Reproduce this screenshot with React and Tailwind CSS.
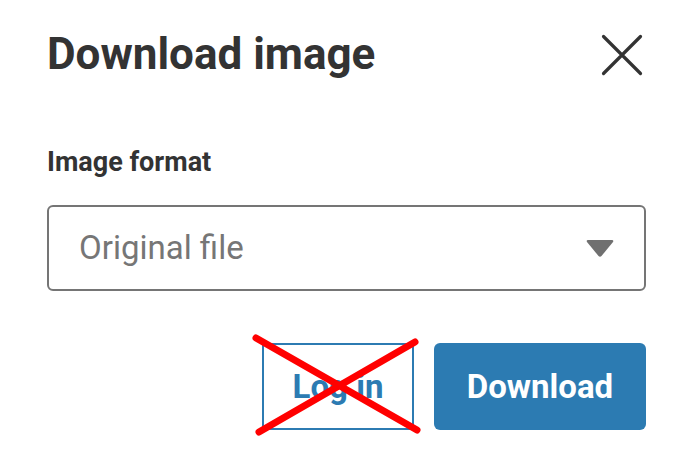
import React from 'react';

const CloseIcon = () => (
    <svg width="42" height="42" viewBox="0 0 42 42" fill="none" className="shrink-0">
        <path d="M2.5 2.5 L39.5 39.5 M39.5 2.5 L2.5 39.5" stroke="#333333" strokeWidth="3.2" strokeLinecap="round" />
    </svg>
);

const Caret = () => (
    <svg width="30" height="20" viewBox="0 0 30 20" className="shrink-0">
        <path d="M3 2 H27 Q29 2 28 4 L16.5 18 Q15 19.5 13.5 18 L2 4 Q1 2 3 2 Z" fill="#707070" />
    </svg>
);

const StrikeOut = () => (
    <svg
        className="absolute left-[-12px] top-[-12px] pointer-events-none"
        width="176"
        height="112"
        viewBox="0 0 176 112"
    >
        <path d="M6 7 L167 99 M9 101 L165 11" stroke="#ff0000" strokeWidth="7" strokeLinecap="round" />
    </svg>
);

const App = () => {
    return (
        <div className="min-h-screen bg-white font-['Roboto',sans-serif] pl-[47px] pr-[46px] pt-[32px]">
            <div className="flex items-center justify-between h-[44px]">
                <h1 className="text-[44px] leading-none font-bold text-[#333333]">Download image</h1>
                <div className="mr-[3px] mt-[2px]">
                    <CloseIcon />
                </div>
            </div>

            <label className="block mt-[73px] text-[27px] leading-none font-bold text-[#333333]">
                Image format
            </label>

            <div className="mt-[29px] h-[86px] flex items-center justify-between border-2 border-[#757575] rounded-[6px] pl-[30px] pr-[29px]">
                <span className="text-[33px] text-[#767676]">Original file</span>
                <Caret />
            </div>

            <div className="mt-[52px] flex justify-end gap-[20px]">
                <div className="relative">
                    <button className="w-[152px] h-[87px] border-2 border-[#2c7bb2] text-[#2c7bb2] text-[33px] font-bold">
                        Log in
                    </button>
                    <StrikeOut />
                </div>
                <button className="w-[212px] h-[87px] rounded-[6px] bg-[#2c7bb2] text-white text-[33px] font-bold">
                    Download
                </button>
            </div>
        </div>
    );
};

export default App;
